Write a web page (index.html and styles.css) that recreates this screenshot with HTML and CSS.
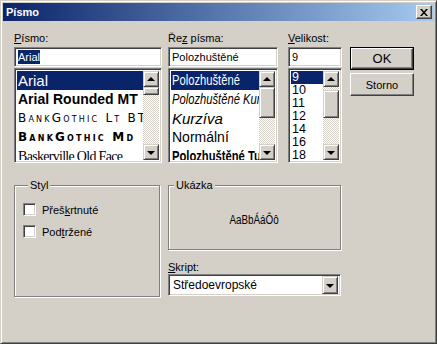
FILE: index.html
```html
<!DOCTYPE html>
<html>
<head>
<meta charset="utf-8">
<link rel="stylesheet" href="styles.css">
</head>
<body>
<div class="window">
  <div class="titlebar">
    <span class="title">Písmo</span>
    <span class="close"><svg width="8" height="7" viewBox="0 0 8 7"><path d="M0 0h2l2 2.5L6 0h2L5 3.5 8 7H6L4 4.5 2 7H0l3-3.5z" fill="#000"/></svg></span>
  </div>
  <div class="content">
    <div class="top">
      <div class="col col-font">
        <div class="label"><u>P</u>ísmo:</div>
        <div class="edit"><span class="sel-text">Arial</span></div>
        <div class="list">
          <div class="items">
            <div class="item selected f-arial">Arial</div>
            <div class="item f-rounded">Arial Rounded MT</div>
            <div class="item f-bank">BankGothic Lt BT</div>
            <div class="item f-bank f-bank-md">BankGothic Md</div>
            <div class="item f-bask">Baskerville Old Face</div>
          </div>
          <div class="sb">
            <span class="sb-btn"><span class="arrow-up"></span></span>
            <div class="sb-track"><span class="sb-thumb thumb-font"></span></div>
            <span class="sb-btn"><span class="arrow-down"></span></span>
          </div>
        </div>
      </div>
      <div class="col col-style">
        <div class="label">Ře<u>z</u> písma:</div>
        <div class="edit">Polozhuštěné</div>
        <div class="list">
          <div class="items">
            <div class="item selected s-narrow"><span class="narrow">Polozhuštěné</span></div>
            <div class="item s-narrow s-italic"><span class="narrow">Polozhuštěné Kurzíva</span></div>
            <div class="item s-regular s-italic">Kurzíva</div>
            <div class="item s-regular">Normální</div>
            <div class="item s-narrow s-bold"><span class="narrow">Polozhuštěné Tučné</span></div>
          </div>
          <div class="sb">
            <span class="sb-btn"><span class="arrow-up"></span></span>
            <div class="sb-track"><span class="sb-thumb thumb-style"></span></div>
            <span class="sb-btn"><span class="arrow-down"></span></span>
          </div>
        </div>
      </div>
      <div class="col col-size">
        <div class="label"><u>V</u>elikost:</div>
        <div class="edit">9</div>
        <div class="list">
          <div class="items size-items">
            <div class="item size selected">9</div>
            <div class="item size">10</div>
            <div class="item size">11</div>
            <div class="item size">12</div>
            <div class="item size">14</div>
            <div class="item size">16</div>
            <div class="item size">18</div>
          </div>
          <div class="sb">
            <span class="sb-btn"><span class="arrow-up"></span></span>
            <div class="sb-track"><span class="sb-thumb thumb-size"></span></div>
            <span class="sb-btn"><span class="arrow-down"></span></span>
          </div>
        </div>
      </div>
      <div class="buttons">
        <span class="btn default"><span class="btn-face">OK</span></span>
        <span class="btn"><span class="btn-face">Storno</span></span>
      </div>
    </div>
    <div class="bottom">
      <fieldset class="group styl">
        <legend>Styl</legend>
        <div class="check"><span class="box"></span><span>Přeš<u>k</u>rtnuté</span></div>
        <div class="check"><span class="box"></span><span>Pod<u>t</u>ržené</span></div>
      </fieldset>
      <div class="right">
        <fieldset class="group sample">
          <legend>Ukázka</legend>
          <div class="sample-text"><span class="narrow-c">AaBbÁáÔô</span></div>
        </fieldset>
        <div class="label skript-label"><u>S</u>kript:</div>
        <div class="combo">
          <span class="combo-text">Středoevropské</span>
          <span class="sb-btn combo-btn"><span class="arrow-down"></span></span>
        </div>
      </div>
    </div>
  </div>
</div>
</body>
</html>
```

FILE: styles.css
```css
* { box-sizing: border-box; }
html, body { margin: 0; padding: 0; background: #d4d0c8; }
body {
  font-family: "Liberation Sans", Arial, sans-serif;
  font-size: 11px;
  color: #000;
}
.window {
  width: 437px;
  height: 344px;
  background: #d4d0c8;
  border: 1px solid;
  border-color: #d4d0c8 #404040 #404040 #d4d0c8;
  box-shadow: inset 1px 1px #fff, inset -1px -1px #808080;
  padding: 2px;
  display: flex;
  flex-direction: column;
}
.titlebar {
  height: 18px;
  background: linear-gradient(to right, #0a246a, #a6caf0);
  display: flex;
  align-items: center;
  justify-content: space-between;
  padding: 0 2px 0 3px;
}
.title {
  color: #fff;
  font-weight: bold;
  font-size: 11px;
}
.close {
  width: 16px;
  height: 14px;
  background: #d4d0c8;
  border: 1px solid;
  border-color: #fff #404040 #404040 #fff;
  box-shadow: inset -1px -1px #808080;
  display: flex;
  align-items: center;
  justify-content: center;
  padding-right: 1px;
}
.content {
  padding: 11px 0 0 11px;
}
.top {
  display: flex;
  align-items: flex-start;
}
.col { display: flex; flex-direction: column; }
.col-font { width: 148px; margin-right: 6px; }
.col-style { width: 110px; margin-right: 10px; }
.col-size { width: 54px; margin-right: 8px; }
.label {
  height: 13px;
  line-height: 13px;
  margin-bottom: 2px;
  white-space: nowrap;
}
.edit, .list, .combo {
  background: #fff;
  border: 1px solid;
  border-color: #808080 #fff #fff #808080;
  box-shadow: inset 1px 1px #404040, inset -1px -1px #d4d0c8;
}
.edit {
  height: 20px;
  padding: 2px 0 0 3px;
  line-height: 14px;
  white-space: nowrap;
  overflow: hidden;
}
.sel-text {
  background: #0a246a;
  color: #fff;
  display: inline-block;
  line-height: 14px;
}
.list {
  margin-top: 1px;
  height: 95px;
  display: flex;
  padding: 2px;
}
.items {
  flex: 1;
  overflow: hidden;
  min-width: 0;
}
.item {
  height: 19px;
  line-height: 19px;
  white-space: nowrap;
  overflow: hidden;
  padding-left: 1px;
}
.item.selected {
  background: #0a246a;
  color: #fff;
}
.f-arial { font-size: 15px; }
.f-rounded { font-size: 14px; font-weight: bold; }
.f-bank {
  font-family: "DejaVu Sans", sans-serif;
  font-variant: small-caps;
  font-size: 12px;
  letter-spacing: 2.2px;
}
.f-bank-md { font-weight: bold; letter-spacing: 2.2px; }
.f-bask {
  font-family: "Liberation Serif", serif;
  font-size: 14px;
  letter-spacing: -0.7px;
}
.s-narrow { font-size: 14px; }
.narrow {
  display: inline-block;
  transform: scaleX(0.8);
  transform-origin: 0 50%;
}
.s-regular { font-size: 14px; }
.s-italic { font-style: italic; }
.s-bold { font-weight: bold; }
.s-regular.s-italic { font-size: 15px; }
.size-items .item.size {
  height: 13px;
  line-height: 13px;
  font-size: 12.5px;
  padding-left: 1px;
}

/* scrollbar */
.sb {
  width: 16px;
  display: flex;
  flex-direction: column;
}
.sb-btn {
  width: 16px;
  height: 16px;
  background: #d4d0c8;
  border: 1px solid;
  border-color: #d4d0c8 #404040 #404040 #d4d0c8;
  box-shadow: inset 1px 1px #fff, inset -1px -1px #808080;
  display: flex;
  align-items: center;
  justify-content: center;
  flex: none;
}
.arrow-up, .arrow-down {
  width: 0;
  height: 0;
  border-left: 4px solid transparent;
  border-right: 4px solid transparent;
}
.arrow-up { border-bottom: 4px solid #000; margin-top: -1px; }
.arrow-down { border-top: 4px solid #000; margin-top: 1px; }
.sb-track {
  flex: 1;
  background-image: repeating-conic-gradient(#fff 0 25%, #d4d0c8 0 50%);
  background-size: 2px 2px;
  display: flex;
  flex-direction: column;
}
.sb-thumb {
  display: block;
  width: 16px;
  background: #d4d0c8;
  border: 1px solid;
  border-color: #d4d0c8 #404040 #404040 #d4d0c8;
  box-shadow: inset 1px 1px #fff, inset -1px -1px #808080;
}
.thumb-font { height: 8px; }
.thumb-style { height: 31px; }
.thumb-size { height: 28px; margin-top: 3px; }

/* buttons */
.buttons {
  display: flex;
  flex-direction: column;
  margin-top: 15px;
  width: 64px;
  gap: 3px;
}
.btn {
  height: 23px;
  display: flex;
}
.btn-face {
  flex: 1;
  background: #d4d0c8;
  border: 1px solid;
  border-color: #fff #404040 #404040 #fff;
  box-shadow: inset -1px -1px #808080;
  display: flex;
  align-items: center;
  justify-content: center;
  font-size: 11px;
}
.btn.default { border: 1px solid #000; }
.btn.default .btn-face { font-size: 13px; }

/* bottom */
.bottom {
  display: flex;
  margin-top: 16px;
}
.group {
  margin: 0;
  padding: 0;
  min-width: 0;
  border: 1px solid #808080;
  box-shadow: inset 1px 1px #fff, 1px 1px #fff;
}
.group legend {
  margin-left: 5px;
  padding: 0 2px;
  line-height: 13px;
  height: 13px;
  font-size: 11px;
  background: #d4d0c8;
}
.styl {
  width: 146px;
  height: 118px;
  margin-right: 8px;
  padding: 11px 0 0 8px;
}
.check {
  display: flex;
  align-items: center;
  height: 13px;
  margin-bottom: 9px;
  gap: 6px;
}
.box {
  width: 13px;
  height: 13px;
  background: #fff;
  border: 1px solid;
  border-color: #808080 #fff #fff #808080;
  box-shadow: inset 1px 1px #404040, inset -1px -1px #d4d0c8;
}
.right {
  width: 173px;
  display: flex;
  flex-direction: column;
}
.sample {
  height: 71px;
  display: block;
}
.sample-text {
  font-size: 12px;
  line-height: 14px;
  margin-top: 21px;
  text-align: center;
}
.narrow-c {
  display: inline-block;
  transform: scaleX(0.82);
  transform-origin: 50% 50%;
}
.skript-label { margin-top: 11px; margin-bottom: 0; }
.combo {
  height: 22px;
  display: flex;
  align-items: center;
  padding: 2px;
}
.combo-text {
  flex: 1;
  padding-left: 2px;
  font-size: 12px;
}
.combo-btn { height: 18px; }
```
